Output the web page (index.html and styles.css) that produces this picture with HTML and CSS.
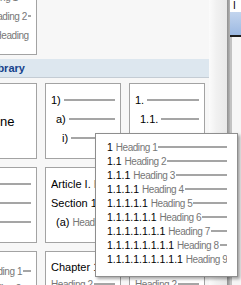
FILE: index.html
```html
<!DOCTYPE html>
<html lang="en">
<head>
    <meta charset="UTF-8">
    <title>Multilevel List</title>
    <link rel="stylesheet" href="styles.css">
</head>
<body>
    <div class="screen">
        <div class="gallery">
            <div class="tiles recent">
                <div class="tile">
                    <div class="row"><span class="txt">1 <span class="name">Heading 1</span></span><span class="rule"></span></div>
                    <div class="row"><span class="txt">1.1 <span class="name">Heading 2</span></span><span class="rule"></span></div>
                    <div class="row"><span class="txt">1.1.1 <span class="name">Heading 3</span></span><span class="rule"></span></div>
                </div>
            </div>

            <div class="section-head">List Library</div>

            <div class="tiles">
                <div class="tile tile-none">None</div>
                <div class="tile">
                    <div class="row"><span class="txt">1)</span><span class="rule gap"></span></div>
                    <div class="row lvl2"><span class="txt">a)</span><span class="rule gap"></span></div>
                    <div class="row lvl3"><span class="txt">i)</span><span class="rule gap"></span></div>
                </div>
                <div class="tile">
                    <div class="row"><span class="txt">1.</span><span class="rule gap"></span></div>
                    <div class="row lvl2"><span class="txt">1.1.</span><span class="rule gap"></span></div>
                    <div class="row lvl3"><span class="txt">1.1.1.</span><span class="rule gap"></span></div>
                </div>

                <div class="tile">
                    <div class="row"><span class="txt">&#8226;</span><span class="rule gap"></span></div>
                    <div class="row lvl2"><span class="txt">&#9702;</span><span class="rule gap"></span></div>
                    <div class="row lvl3"><span class="txt">&#9642;</span><span class="rule gap"></span></div>
                </div>
                <div class="tile">
                    <div class="row"><span class="txt">Article I. <span class="name">Heading 1</span></span><span class="rule"></span></div>
                    <div class="row"><span class="txt">Section 1.01 <span class="name">Heading 2</span></span><span class="rule"></span></div>
                    <div class="row lvl2"><span class="txt">(a) <span class="name">Heading 3</span></span><span class="rule"></span></div>
                </div>
                <div class="tile">
                    <div class="row"><span class="txt">1 <span class="name">Heading 1</span></span><span class="rule"></span></div>
                    <div class="row lvl2"><span class="txt">1.1 <span class="name">Heading 2</span></span><span class="rule"></span></div>
                    <div class="row lvl3"><span class="txt">1.1.1 <span class="name">Heading 3</span></span><span class="rule"></span></div>
                </div>

                <div class="tile tile-loose">
                    <div class="row"><span class="txt">A. <span class="name">Heading 1</span></span><span class="rule"></span></div>
                    <div class="row"><span class="txt">1. <span class="name">Heading 2</span></span><span class="rule"></span></div>
                </div>
                <div class="tile tile-tight">
                    <div class="row"><span class="txt">Chapter 1 Heading 1</span><span class="rule"></span></div>
                    <div class="row"><span class="txt"><span class="name">Heading 2</span></span><span class="rule"></span></div>
                </div>
                <div class="tile tile-tight">
                    <div class="row"><span class="txt"><span class="name">Heading 1</span></span><span class="rule"></span></div>
                    <div class="row"><span class="txt"><span class="name">Heading 2</span></span><span class="rule"></span></div>
                </div>
            </div>
        </div>

        <div class="scrollbar"></div>
        <div class="edge"></div>
        <div class="doc">
            <div class="doc-top">I</div>
            <div class="doc-band"></div>
            <div class="doc-page"></div>
        </div>

        <!-- preview of the hovered list -->
        <div class="preview">
            <div class="pv-row"><span class="pv-text">1 <span class="name">Heading 1</span></span><span class="rule"></span></div>
            <div class="pv-row"><span class="pv-text">1.1 <span class="name">Heading 2</span></span><span class="rule"></span></div>
            <div class="pv-row"><span class="pv-text">1.1.1 <span class="name">Heading 3</span></span><span class="rule"></span></div>
            <div class="pv-row"><span class="pv-text">1.1.1.1 <span class="name">Heading 4</span></span><span class="rule"></span></div>
            <div class="pv-row"><span class="pv-text">1.1.1.1.1 <span class="name">Heading 5</span></span><span class="rule"></span></div>
            <div class="pv-row"><span class="pv-text">1.1.1.1.1.1 <span class="name">Heading 6</span></span><span class="rule"></span></div>
            <div class="pv-row"><span class="pv-text">1.1.1.1.1.1.1 <span class="name">Heading 7</span></span><span class="rule"></span></div>
            <div class="pv-row"><span class="pv-text">1.1.1.1.1.1.1.1 <span class="name">Heading 8</span></span><span class="rule"></span></div>
            <div class="pv-row"><span class="pv-text">1.1.1.1.1.1.1.1.1 <span class="name">Heading 9</span></span><span class="rule"></span></div>
        </div>
    </div>
</body>
</html>
```

FILE: styles.css
```css
body {
    margin: 0;
    font-family: "Liberation Sans", Arial, sans-serif;
    font-size: 11px;
    color: #000;
    overflow: hidden;
}
.screen {
    position: relative;
    display: flex;
    width: 241px;
    height: 285px;
    overflow: hidden;
    background: #fff;
}
.gallery {
    flex: none;
    width: 209px;
    background: #f7f7f7;
    overflow: hidden;
}
.tiles {
    display: grid;
    grid-template-columns: repeat(3, 76px);
    gap: 8px;
    margin-left: -39px;
}
.recent {
    margin-top: -21px;
}
.recent .tile {
    padding-top: 7px;
}
.tile {
    box-sizing: border-box;
    height: 76px;
    padding: 6px 5px 0;
    border: 1px solid #a3a3a3;
    background: #fff;
    overflow: hidden;
}
.tile-none {
    display: flex;
    align-items: center;
    justify-content: center;
    padding: 0;
    font-size: 13px;
}
.tile-loose {
    padding-top: 10px;
}
.tile-loose .row,
.tile-tight .row {
    height: 17px;
}
.section-head {
    height: 18px;
    margin: 4px 0 5px;
    line-height: 18px;
    background: #dde7ef;
    border-bottom: 1px solid #c4ccd4;
    color: #15428b;
    font-weight: bold;
    text-indent: -35px;
    white-space: nowrap;
    overflow: hidden;
}
.row {
    display: flex;
    align-items: center;
    height: 19px;
    white-space: nowrap;
    overflow: hidden;
}
.lvl2 {
    padding-left: 5px;
}
.lvl3 {
    padding-left: 11px;
}
.txt {
    flex: none;
}
.name {
    font-size: 10px;
    letter-spacing: -0.45px;
    color: #777;
}
.rule {
    flex: 1;
    min-width: 0;
    height: 2px;
    margin-left: 1px;
    background: #a5a5a5;
}
.rule.gap {
    margin-left: 3px;
}
.scrollbar {
    flex: none;
    width: 18px;
    background: linear-gradient(to right, #fbfbfb, #f1f1f1 40%, #e8e8e8);
}
.edge {
    flex: none;
    width: 3px;
    background: linear-gradient(to right, #8e8e8e, #b5b5b5);
}
.doc {
    flex: 1;
    display: flex;
    flex-direction: column;
}
.doc-top {
    height: 12px;
    padding-left: 3px;
    line-height: 12px;
    font-size: 10px;
    background: #fff;
}
.doc-band {
    height: 23px;
    background: linear-gradient(#c3d5ee, #9cb9e2);
    border-bottom: 2px solid #1e1e1e;
}
.doc-page {
    flex: 1;
    background: #f6f6f6;
    border-left: 2px solid #c2c2c2;
}
.preview {
    position: absolute;
    left: 95px;
    top: 133px;
    box-sizing: border-box;
    width: 143px;
    height: 144px;
    padding: 6px 10px 0 11px;
    background: #fff;
    border: 1px solid #8e8e8e;
    box-shadow: 2px 2px 3px rgba(0, 0, 0, 0.35);
}
.pv-row {
    display: flex;
    align-items: center;
    height: 14px;
    white-space: nowrap;
    overflow: hidden;
}
.pv-text {
    flex: none;
    font-size: 10.5px;
}
```
